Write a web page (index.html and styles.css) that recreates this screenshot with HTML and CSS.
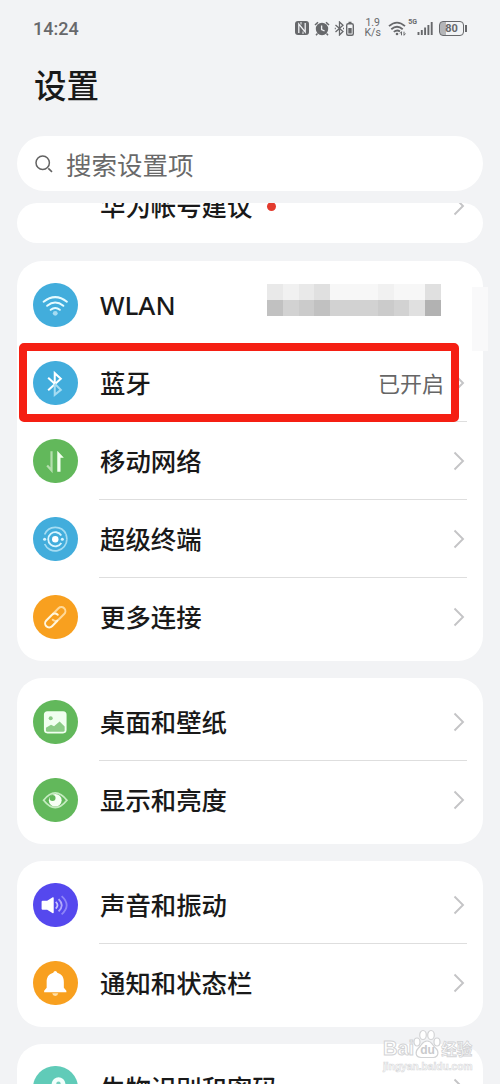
FILE: index.html
```html
<!DOCTYPE html>
<html lang="zh-CN">
<head>
  <meta charset="UTF-8">
  <meta name="viewport" content="width=device-width, initial-scale=1.0">
  <title>设置</title>
  <link rel="stylesheet" href="styles.css">
</head>
<body>
  <svg width="0" height="0" class="defs">
    <symbol id="arrow" viewBox="0 0 12 20"><path d="M1.500 1.500 10 10l-8.500 8.500" fill="none" stroke="#c4c4c6" stroke-width="1.900"/></symbol>
  </svg>
  <header>
    <div class="status">
      <span class="time">14:24</span>
      <div class="tray">
        <svg class="nfc" width="14" height="14" viewBox="0 0 14 14"><rect width="14" height="14" rx="3" fill="#67686b"/><path d="M3.800 12V3L10.200 11V2" fill="none" stroke="#f1f2f5" stroke-width="1.300"/><path d="M6 1v2.500M8 10.500V13" stroke="#f1f2f5"/></svg>
        <svg class="alarm" width="16" height="15" viewBox="0 0 16 15"><circle cx="8" cy="8" r="6.200" fill="#67686b"/><path d="M1 4 4 1.200M15 4l-3-2.800M3.500 12.500 2 14.200M12.500 12.500l1.500 1.700" stroke="#67686b" stroke-width="1.500"/><path d="M7.600 4.500v4l3 1.500" fill="none" stroke="#f1f2f5" stroke-width="1.300"/></svg>
        <svg class="bt" width="21" height="15" viewBox="0 0 21 15"><path d="m1.500 4 7.500 6.500-3.500 3.500V1L9 4.300 1.500 11" fill="none" stroke="#67686b" stroke-width="1.300"/><path d="M.8 7.500h1M9 7.500h1" stroke="#67686b" stroke-width="1.300"/><rect x="12.700" y="2.700" width="6.600" height="11.500" rx="1.500" fill="none" stroke="#67686b" stroke-width="1.400"/><path d="M14.500 1.500h3" stroke="#67686b" stroke-width="1.500"/><path d="M14.300 7h3.400v5.500h-3.400z" fill="#67686b"/></svg>
        <span class="speed">1.9<br>K/s</span>
        <svg class="wifi" width="18" height="15" viewBox="0 0 18 15"><g fill="none" stroke="#67686b" stroke-width="1.800"><path d="M1 5.200Q9-2 17 5.200M3.300 8.200q5.700-5 11.400 0M5.800 10.900q3.200-2.600 6.200-.5"/></g><circle cx="9" cy="13" r="1.300" fill="#67686b"/><path d="m12 12.500 1.500-1.800v3.600M16 10.700v3.600l1.500-1.800" fill="none" stroke="#67686b"/></svg>
        <span class="net">5G</span>
        <svg class="signal" width="16" height="15" viewBox="0 0 16 15"><path d="M1.500 11v3M4.800 9v5M8.100 6.500V14M11.400 4v10M14.700 1v13" stroke="#67686b" stroke-width="1.900"/></svg>
        <span class="battery">80</span>
      </div>
    </div>
    <h1>设置</h1>
    <div class="search">
      <svg width="20" height="20" viewBox="0 0 20 20"><circle cx="8.700" cy="8.700" r="6.700" fill="none" stroke="#626262" stroke-width="1.500"/><path d="m14.300 14.300 3.700 3.500" stroke="#626262" stroke-width="1.600"/></svg>
      <span>搜索设置项</span>
    </div>
  </header>
  <main>
    <section class="card cut">
      <div class="row"><span class="label">华为帐号建议</span><i class="dot"></i><svg class="arrow"><use href="#arrow"/></svg></div>
    </section>

    <section class="card">
      <div class="row wlan">
        <svg class="icon blue" viewBox="0 0 44 44"><g fill="none" stroke="#e6fbff" stroke-width="2" stroke-linecap="round"><path d="M10.500 18.500q11.500-9 23 0"/><path d="M14 22.500q8-6.400 16 0"/><path d="M17.500 26.500q4.500-3.500 9 0"/></g><circle cx="22" cy="30" r="2.400" fill="#a5dcf2"/></svg>
        <span class="label">WLAN</span>
        <div class="mosaic">
          <i class="a"></i><i class="b"></i><i class="a"></i><i class="c"></i><i class="d"></i><i class="d"></i><i class="d"></i><i class="b"></i><i class="d"></i><i class="d"></i><i class="c"></i>
          <i class="g"></i><i class="e"></i><i class="f"></i><i class="g"></i><i class="e"></i><i class="e"></i><i class="e"></i><i class="f"></i><i class="e"></i><i class="c"></i><i class="h"></i>
        </div>
        <div class="smudge"></div>
      </div>
      <div class="row">
        <svg class="icon blue" viewBox="0 0 44 44"><path d="M15 29 27.500 17.500 21.500 12v10.500" fill="none" stroke="#fff" stroke-width="2"/><path d="m21.500 22.500 6 6-6 5V22.500" fill="none" stroke="#a5dcf2" stroke-width="2"/><path d="m15 16.500 6.500 6" stroke="#fff" stroke-width="2"/></svg>
        <span class="label">蓝牙</span><span class="value">已开启</span>
        <svg class="arrow"><use href="#arrow"/></svg>
        <div class="mark"></div>
      </div>
      <div class="row">
        <svg class="icon green" viewBox="0 0 44 44"><path d="M18.300 12v19L14 26.300" fill="none" stroke="#b5dfae" stroke-width="2.200"/><path d="M24 32.500V11.500l6.500 7h-3.300v14z" fill="#f4fff1"/></svg>
        <span class="label">移动网络</span><svg class="arrow"><use href="#arrow"/></svg>
      </div>
      <div class="row">
        <svg class="icon blue" viewBox="0 0 44 44"><g fill="none" stroke="#a5dcf2" stroke-width="1.700"><path d="M11.500 17.300a11.500 11.500 0 0 1 21-.5"/><path d="M33.500 22a11.500 11.500 0 0 1-22 4.700"/><path d="M33.500 22q0-2.500-1-5"/></g><path d="M28 18.300a7 7 0 1 0 0 7.400" fill="none" stroke="#d8f5ff" stroke-width="1.800"/><circle cx="22" cy="22" r="3.200" fill="#fff"/><circle cx="11.500" cy="22" r="1.500" fill="#d8f5ff"/><circle cx="29" cy="22" r="1.500" fill="#d8f5ff"/></svg>
        <span class="label">超级终端</span><svg class="arrow"><use href="#arrow"/></svg>
      </div>
      <div class="row">
        <svg class="icon orange" viewBox="0 0 44 44"><g fill="none" stroke-width="2" stroke-linecap="round" transform="rotate(-45 22 22)"><path d="M23 18h7.500a4 4 0 0 1 0 8h-8a4 4 0 0 1-4-4" stroke="#ffd999"/><path d="M21 26h-7.500a4 4 0 0 1 0-8h8a4 4 0 0 1 4 4" stroke="#fff7df"/></g></svg>
        <span class="label">更多连接</span><svg class="arrow"><use href="#arrow"/></svg>
      </div>
    </section>

    <section class="card">
      <div class="row">
        <svg class="icon green" viewBox="0 0 44 44"><rect x="10.800" y="11" width="22.400" height="22" rx="3.500" fill="#f1fff0"/><circle cx="17.500" cy="18" r="2" fill="#8bcb86"/><path d="M12.800 30.500v-3l5-3 3 1.500 5.500-4.700 5 5v4.200q-.5 1-1.500 1H14q-1 0-1.200-1z" fill="#8bcb86"/></svg>
        <span class="label">桌面和壁纸</span><svg class="arrow"><use href="#arrow"/></svg>
      </div>
      <div class="row">
        <svg class="icon green" viewBox="0 0 44 44"><path d="M10.500 22q11.500-14.500 23 0-11.500 14.500-23 0z" fill="none" stroke="#c5ebc0" stroke-width="1.800"/><circle cx="22" cy="22" r="6.300" fill="#f7fff5"/><circle cx="19.300" cy="19.700" r="3" fill="#62b85b"/></svg>
        <span class="label">显示和亮度</span><svg class="arrow"><use href="#arrow"/></svg>
      </div>
    </section>

    <section class="card">
      <div class="row">
        <svg class="icon purple" viewBox="0 0 44 44"><path d="M9.500 17.500h4.500l5.500-3.300q1-.4 1 .8v14q0 1.200-1 .8L14 26.500H9.500q-1 0-1-1v-7q0-1 1-1z" fill="#fff"/><g fill="none" stroke-width="1.800"><path d="M22.500 18.700q3.500 3.300 0 6.600" stroke="#c8c4fc"/><path d="M25.300 16q6.300 6 0 12" stroke="#b0a9fa"/><path d="M28.300 13q10 9 0 18" stroke="#8f86f7"/></g></svg>
        <span class="label">声音和振动</span><svg class="arrow"><use href="#arrow"/></svg>
      </div>
      <div class="row">
        <svg class="icon orange" viewBox="0 0 44 44"><path d="M22 10q1.500 0 2 1.700c5 1.400 6.500 5 6.500 9.300v5.500l2.500 3V31H11v-1.500l2.500-3V21c0-4.300 1.500-7.900 6.500-9.300Q20.500 10 22 10z" fill="#fff"/><path d="M19 32h6q-.5 2.500-3 2.500T19 32z" fill="#ffe0aa"/></svg>
        <span class="label">通知和状态栏</span><svg class="arrow"><use href="#arrow"/></svg>
      </div>
    </section>

    <section class="card">
      <div class="row">
        <svg class="icon teal" viewBox="0 0 44 44"><path d="M18.500 24v-7a6.800 6.800 0 0 1 13.500 0v7z" fill="#f3fffc"/><circle cx="25.200" cy="17.500" r="2.200" fill="#76cfbe"/></svg>
        <span class="label">生物识别和密码</span><svg class="arrow"><use href="#arrow"/></svg>
      </div>
    </section>
  </main>

  <div class="watermark">
    <div class="brand">
      <span class="bai">Bai</span>
      <div class="paw">
        <svg width="28" height="30" viewBox="0 0 28 30"><g fill="#fff" stroke="#d2d3d5" stroke-width="1.200"><ellipse cx="4" cy="13" rx="3" ry="4"/><ellipse cx="10" cy="6" rx="3.300" ry="4.500"/><ellipse cx="18" cy="6" rx="3.300" ry="4.500"/><ellipse cx="24" cy="13" rx="3" ry="4"/><path d="M14 12c5 0 5 4 8.500 7s3.500 9-2 9.500H8c-6-.5-6-6-2.500-9.500S9.500 12 14 12z"/></g></svg>
        <b>du</b>
      </div>
      <span class="jy">经验</span>
    </div>
    <p>jingyan.baidu.com</p>
  </div>
</body>
</html>
```
FILE: styles.css
```css
* {
  padding: 0;
  margin: 0;
  box-sizing: border-box;
}
html {
  overflow: hidden;
}
body {
  height: 1084px;
  width: 500px;
  overflow: hidden;
  position: relative;
  background-color: #f2f3f5;
  color: #191919;
  font-family: "Noto Sans", "Noto Sans CJK SC", sans-serif;
}
svg {
  display: block;
  flex: none;
}
.defs {
  position: absolute;
}
header {
  height: 203px;
}
.status {
  height: 56px;
  padding: 0 36px 0 33px;
  display: flex;
  align-items: center;
  justify-content: space-between;
  color: #67686b;
}
.time {
  font: 500 18px Roboto, sans-serif;
  padding-top: 1px;
}
.tray {
  display: flex;
  align-items: center;
}
.alarm {
  margin-left: 5px;
}
.bt {
  margin-left: 4px;
}
.speed {
  width: 17px;
  margin: 0 7px 0 9px;
  font: 10.500px/10px Roboto, sans-serif;
  text-align: center;
}
.net {
  align-self: flex-start;
  margin: 0 0 0 2px;
  font: 700 7px/9px Roboto, sans-serif;
}
.battery {
  position: relative;
  width: 25px;
  height: 15px;
  margin-left: 6px;
  border: 1.500px solid #67686b;
  border-radius: 4px;
  background: linear-gradient(90deg, #b4b5b8 6px, transparent 6px);
  font: 700 11px/13px Roboto, sans-serif;
  text-align: center;
}
.battery::after {
  content: "";
  position: absolute;
  right: -4px;
  top: 3px;
  width: 2px;
  height: 7px;
  background-color: #67686b;
}
h1 {
  height: 80px;
  padding-left: 34px;
  font: 500 32.500px/55px "Noto Sans CJK SC", sans-serif;
}
.search {
  height: 55px;
  margin: 0 17px;
  padding-left: 17px;
  display: flex;
  align-items: center;
  border-radius: 28px;
  background-color: #fff;
  color: #696969;
  font: 25.500px/54px "Noto Sans CJK SC", sans-serif;
}
.search span {
  margin-left: 12px;
}
.card {
  margin: 0 17px 17px;
  padding: 5px 16px;
  border-radius: 25px;
  background-color: #fff;
}
.cut {
  height: 40px;
  margin-bottom: 18px;
  padding: 0 16px;
  border-radius: 20px;
  overflow: hidden;
}
.cut .row {
  margin-top: -36px;
  padding-left: 67px;
}
.cut .label {
  margin-left: 0;
}
.row {
  position: relative;
  height: 78px;
  display: flex;
  align-items: center;
}
.row:not(:last-child)::after {
  content: "";
  position: absolute;
  left: 66px;
  right: 0;
  bottom: 0;
  height: 1px;
  background-color: #dedede;
}
.row.wlan::after {
  display: none;
}
.icon {
  width: 44.500px;
  height: 44.500px;
  border-radius: 50%;
}
.blue {
  background-color: #42addc;
}
.green {
  background-color: #62b85b;
}
.orange {
  background-color: #f8a01f;
}
.purple {
  background-color: #5548ee;
}
.teal {
  background-color: #60cbb8;
}
.label {
  margin-left: 22.500px;
  padding-bottom: 3px;
  font: 500 25.400px/38px "Noto Sans CJK SC", sans-serif;
}
.wlan .label {
  padding-bottom: 0;
  font: 500 26px/38px "Noto Sans", sans-serif;
}
.arrow {
  width: 12px;
  height: 20px;
  margin-left: auto;
  margin-right: 2px;
}
.dot {
  width: 9px;
  height: 9px;
  margin-left: 15px;
  border-radius: 50%;
  background-color: #e33b2e;
}
.value {
  margin-left: auto;
  padding-bottom: 3px;
  color: #666;
  font: 22px/34px "Noto Sans CJK SC", sans-serif;
}
.value + .arrow {
  margin-left: 9px;
}
.mark {
  position: absolute;
  z-index: 1;
  left: -14px;
  top: -1px;
  width: 440px;
  height: 79px;
  border: 8px solid #f51f13;
  border-radius: 5px;
}
.mosaic {
  width: 174px;
  margin: -10px 26px 0 auto;
  display: grid;
  grid-template-columns: repeat(11, 1fr);
  grid-auto-rows: 16px;
}
.smudge {
  position: absolute;
  right: -21px;
  top: 21px;
  width: 16px;
  height: 64px;
  background-color: #f9f9fa;
}
.a { background-color: #e9e9e9; }
.b { background-color: #f1f1f1; }
.c { background-color: #e0e0e0; }
.d { background-color: #f7f7f7; }
.e { background-color: #d2d2d2; }
.f { background-color: #cbcbcb; }
.g { background-color: #c1c1c1; }
.h { background-color: #b2b2b2; }
.watermark {
  position: absolute;
  z-index: 2;
  left: 383px;
  top: 1029px;
  color: #fff;
  white-space: nowrap;
}
.brand {
  height: 30px;
  display: flex;
  align-items: flex-end;
}
.bai {
  font: 700 20px/22px "Liberation Sans", sans-serif;
  -webkit-text-stroke: 1px #d2d3d5;
}
.paw {
  position: relative;
  margin-left: -1px;
}
.paw b {
  position: absolute;
  left: 7px;
  top: 15px;
  color: #c9cacc;
  font: 700 12px/13px "Liberation Sans", sans-serif;
}
.jy {
  font: 700 15.500px/22px "Noto Sans CJK SC", sans-serif;
  -webkit-text-stroke: 0.800px #d2d3d5;
}
.watermark p {
  font: 700 10.200px/15px "Liberation Sans", sans-serif;
  -webkit-text-stroke: 0.600px #d8d9db;
}
```
